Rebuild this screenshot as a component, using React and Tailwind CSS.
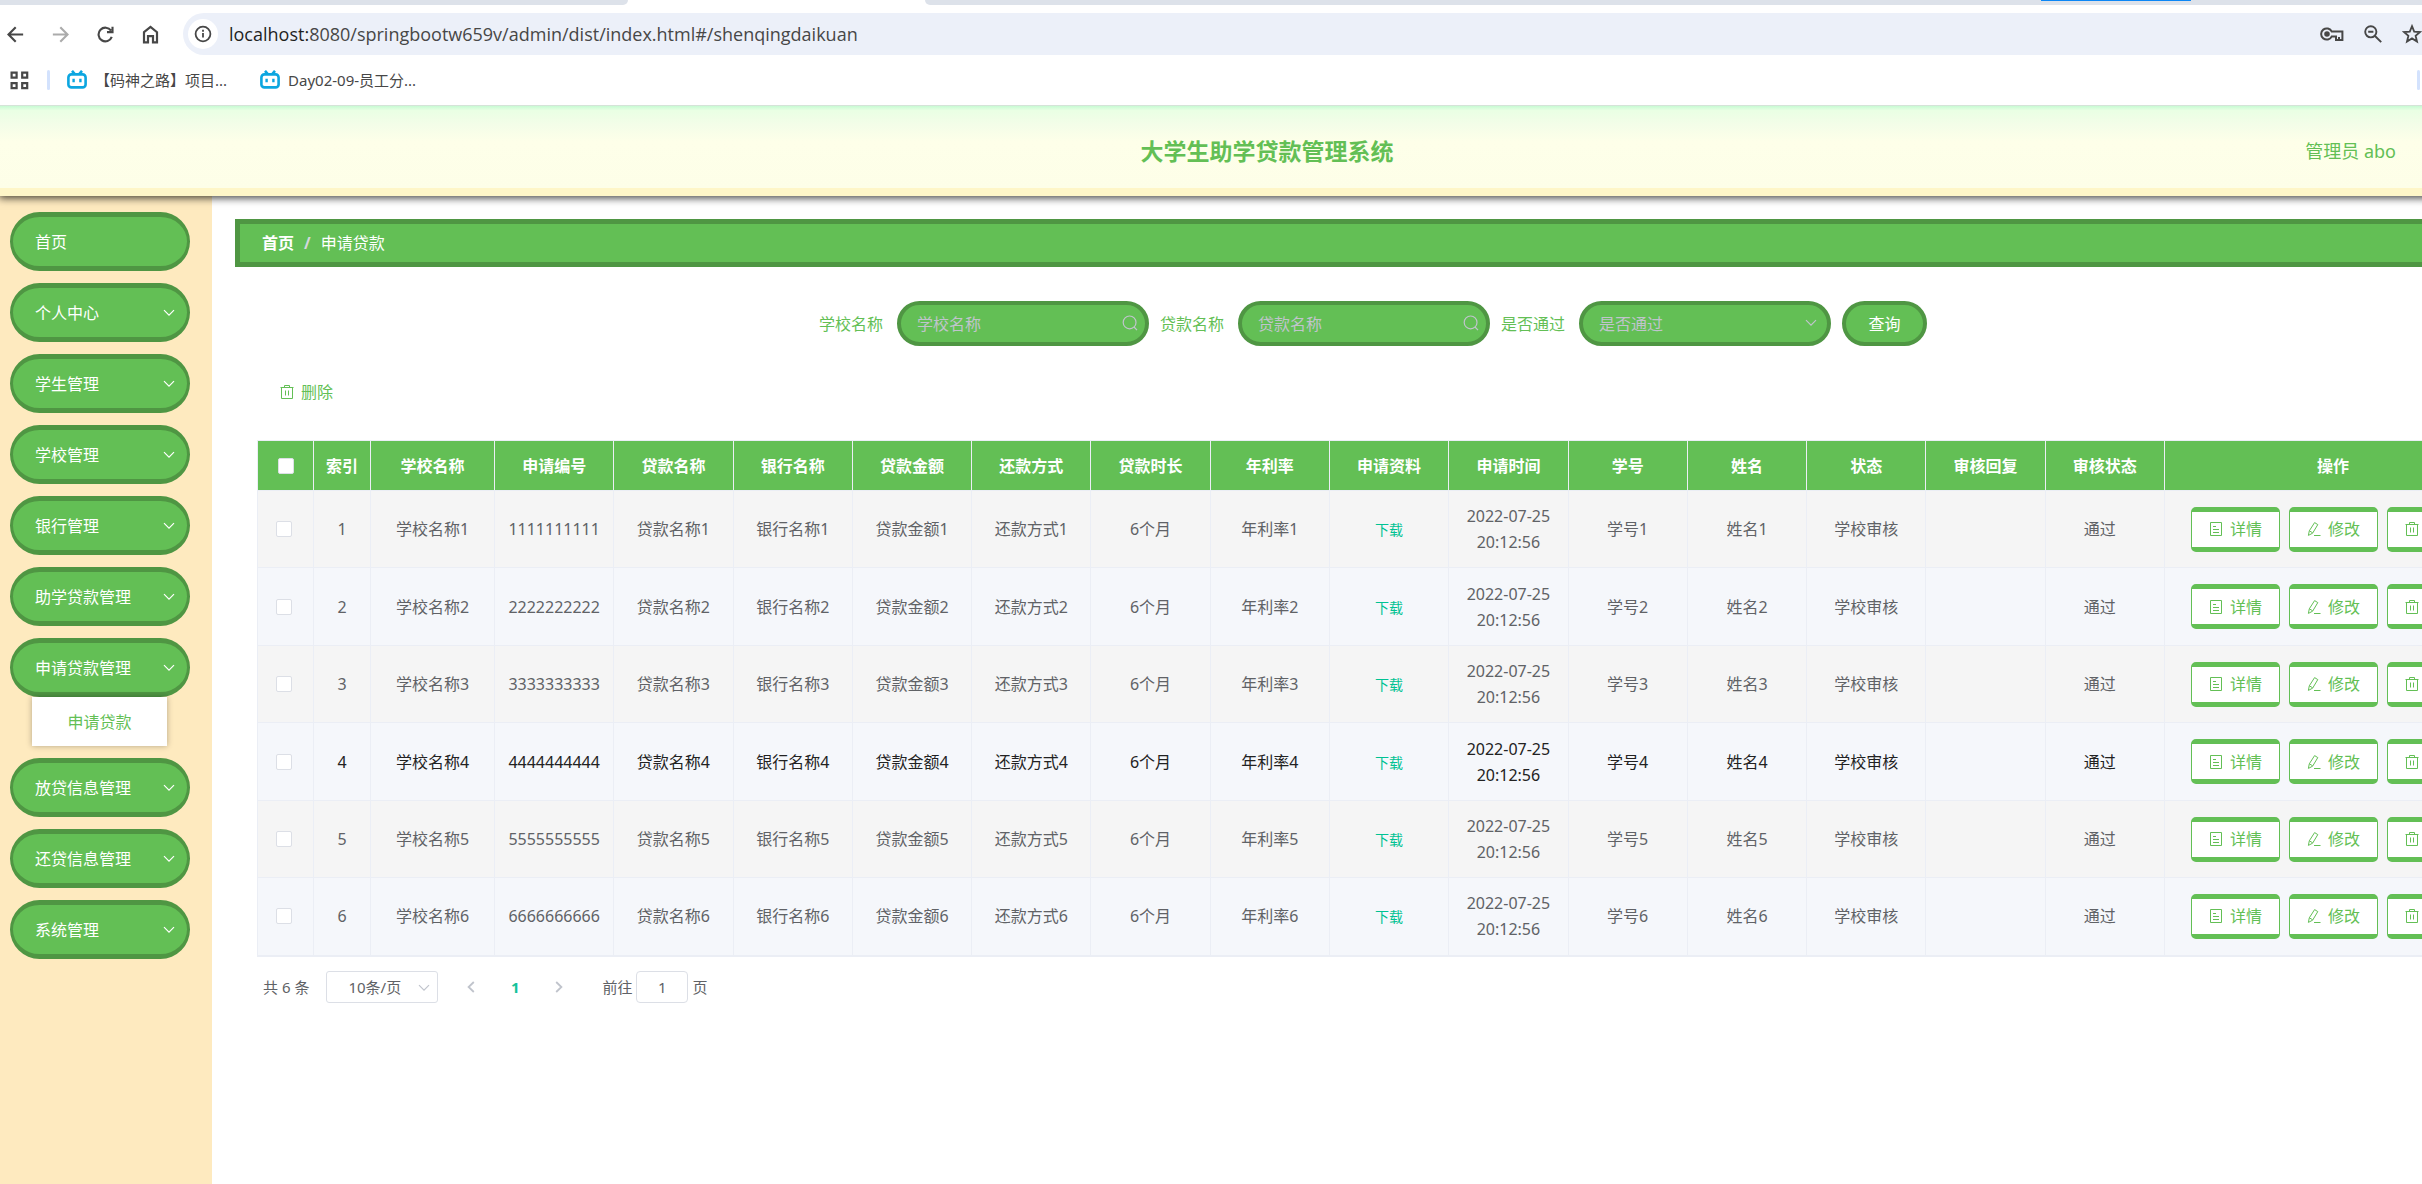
import { useState } from 'react'

const menus = [
  { name: '首页' },
  { name: '个人中心', more: true },
  { name: '学生管理', more: true },
  { name: '学校管理', more: true },
  { name: '银行管理', more: true },
  { name: '助学贷款管理', more: true },
  { name: '申请贷款管理', more: true, children: ['申请贷款'] },
  { name: '放贷信息管理', more: true },
  { name: '还贷信息管理', more: true },
  { name: '系统管理', more: true },
]

const columns = [
  '学校名称', '申请编号', '贷款名称', '银行名称', '贷款金额', '还款方式', '贷款时长', '年利率',
  '申请资料', '申请时间', '学号', '姓名', '状态', '审核回复', '审核状态',
]

const rows = [1, 2, 3, 4, 5, 6].map((n) => ({
  id: n,
  school: `学校名称${n}`,
  code: String(n).repeat(10),
  loan: `贷款名称${n}`,
  bank: `银行名称${n}`,
  amount: `贷款金额${n}`,
  repay: `还款方式${n}`,
  term: '6个月',
  rate: `年利率${n}`,
  time: '2022-07-25 20:12:56',
  number: `学号${n}`,
  student: `姓名${n}`,
  status: '学校审核',
  reply: '',
  result: '通过',
}))

function Icon({ className, box = '0 0 16 16', width = 1, children }) {
  return (
    <svg className={className} viewBox={box} fill="none" stroke="currentColor" strokeWidth={width} aria-hidden="true">
      {children}
    </svg>
  )
}

function Chevron({ className }) {
  return (
    <Icon className={className} box="0 0 12 8" width={1.2}>
      <path d="M1 1.2l5 5 5-5" />
    </Icon>
  )
}

function TrashIcon() {
  return (
    <Icon className="size-4">
      <path d="M1.5 3.5h13M5.5 3.5v-2h5v2M2.5 3.5v11h11v-11M6.5 6.5v5M9.5 6.5v5" />
    </Icon>
  )
}

function DocIcon() {
  return (
    <Icon className="size-4">
      <path d="M2.5 1.5h11v13h-11zM5 5.5h3M5 8.5h6M5 11.5h6" />
    </Icon>
  )
}

function EditIcon() {
  return (
    <Icon className="size-4">
      <path d="M8.6 1.6l3.2 2-5.2 8.6-4.2 2.2.9-4.6zM3.4 9.8l3.2 2M8 14.5h6.5" />
    </Icon>
  )
}

function BiliIcon() {
  return (
    <svg className="h-5 w-5 text-[#0ca6e0]" viewBox="0 0 20 20" fill="none" stroke="currentColor" strokeWidth="2.6" aria-hidden="true">
      <path d="M5 .8l2.6 3M15 .8l-2.6 3" />
      <rect x="1.4" y="4.4" width="17.2" height="13" rx="3" />
      <path d="M6.6 8.8v3.4M13.4 8.8v3.4" strokeWidth="2.4" />
    </svg>
  )
}

function Browser() {
  return (
    <div className="relative z-10 bg-white text-[#474747]">
      <div className="relative flex h-[5px] justify-between">
        <div className="w-[628px] rounded-br-lg bg-[#dde2ea]" />
        <div className="w-[1497px] rounded-bl-lg bg-[#dde2ea]" />
        <div className="absolute right-[231px] top-0 h-px w-[150px] bg-[#0b86f5]" />
      </div>
      <div className="mt-2 flex h-[42px] items-center">
        <div className="flex w-[183px] items-center gap-7 pl-[7px]">
          <button type="button" aria-label="后退">
            <Icon className="size-[17px]" width={2}>
              <path d="M15.2 8H2M8.2 1.2L1.4 8l6.8 6.8" />
            </Icon>
          </button>
          <button type="button" aria-label="前进" className="text-[#ababab]">
            <Icon className="size-[17px]" width={2}>
              <path d="M.8 8H14M7.8 1.2L14.6 8l-6.8 6.8" />
            </Icon>
          </button>
          <button type="button" aria-label="刷新">
            <Icon className="size-[17px]" width={2}>
              <path d="M13.9 10.2A6.4 6.4 0 1 1 13.2 4.4M14.6.6v5.2H9.4" />
            </Icon>
          </button>
          <button type="button" aria-label="主页">
            <Icon className="h-[19px] w-[17px]" box="0 0 17 19" width={2.2}>
              <path d="M2 7.2L8.5 2 15 7.2V17.4h-4v-6.2H6v6.2H2z" />
            </Icon>
          </button>
        </div>
        <div className="flex h-full flex-1 items-center rounded-l-full bg-[#ecf0f9] pl-[5px]">
          <span className="grid size-[30px] place-items-center rounded-full bg-white">
            <Icon className="size-[18px]" box="0 0 18 18" width={1.8}>
              <circle cx="9" cy="9" r="7.4" />
              <path d="M9 8v4.6M9 4.8v1.9" />
            </Icon>
          </span>
          <span className="ml-[11px] flex-1 font-['Open_Sans',sans-serif] text-[18px] leading-6">
            <span className="text-[#1f1f1f]">localhost:</span>8080/springbootw659v/admin/dist/index.html#/shenqingdaikuan
          </span>
          <div className="flex items-center gap-5">
            <Icon className="h-[14px] w-6" box="0 0 24 14" width={2}>
              <path d="M11.8 4.6A5.6 5.6 0 1 0 11.8 9.4H16V13h6.4V4.6z" />
              <circle cx="7" cy="7" r="1.8" fill="currentColor" />
              <path d="M19 13v-3" />
            </Icon>
            <Icon className="size-[18px]" box="0 0 18 18" width={1.9}>
              <circle cx="6.8" cy="6.8" r="5.6" />
              <path d="M11 11l6.2 6.2M4.2 6.8h5.2" />
            </Icon>
            <Icon className="size-5" box="0 0 20 20" width={1.8}>
              <path d="M10 2.2l2.2 5.4 5.8.4-4.4 3.8 1.4 5.8-5-3.2-5 3.2 1.4-5.8L2 8l5.8-.4z" />
            </Icon>
          </div>
        </div>
      </div>
      <div className="flex h-[51px] items-center border-b border-[#d5e3d8] pl-2.5 font-['Noto_Sans','Noto_Sans_CJK_SC',sans-serif] text-[15px]">
        <Icon className="size-[19px]" box="0 0 19 19" width={2.2}>
          <path d="M1.6 1.6h5v5h-5zM12.2 1.6h5v5h-5zM1.6 12.2h5v5h-5zM12.2 12.2h5v5h-5z" />
        </Icon>
        <span className="ml-[18px] h-5 w-[3px] rounded-full bg-[#d3e2fd]" />
        <a href="#bookmark-1" className="ml-[17px] flex items-center gap-2">
          <BiliIcon />
          【码神之路】项目...
        </a>
        <a href="#bookmark-2" className="ml-[33px] flex items-center gap-2">
          <BiliIcon />
          Day02-09-员工分...
        </a>
        <span className="ml-auto mr-0.5 h-5 w-[3px] rounded-full bg-[#d3e2fd]" />
      </div>
    </div>
  )
}

function Sidebar() {
  return (
    <nav className="flex w-[212px] shrink-0 flex-col gap-3 bg-[#feeabf] px-2.5 pt-4">
      {menus.map((m) => (
        <div key={m.name}>
          <button
            type="button"
            className="flex h-[59px] w-[180px] items-center justify-between rounded-full border-x-[3px] border-y-[5px] border-[#4f9643] bg-[#63bf55] pl-[22px] pr-3 text-white"
          >
            {m.name}
            {m.more ? <Chevron className="h-2 w-3" /> : null}
          </button>
          {m.children?.map((c) => (
            <a
              key={c}
              href="#/shenqingdaikuan"
              className="ml-[22px] flex h-[49px] w-[135px] items-center justify-center bg-white text-[#63bf55] shadow-[0_0_6px_rgba(0,0,0,0.3)]"
            >
              {c}
            </a>
          ))}
        </div>
      ))}
    </nav>
  )
}

const field =
  'h-[45px] w-[252px] appearance-none rounded-full border-4 border-[#4f9643] bg-[#63bf55] pl-4 pr-10 text-white outline-none placeholder:text-[#c0c4cc]'

function Search() {
  return (
    <form className="flex items-center justify-center gap-[11px]" onSubmit={(e) => e.preventDefault()}>
      {['学校名称', '贷款名称'].map((name) => (
        <div key={name} className="flex items-center gap-3.5">
          <label htmlFor={name} className="text-[#63bf55]">{name}</label>
          <div className="relative">
            <input id={name} className={field} placeholder={name} />
            <Icon className="absolute right-[11px] top-3.5 size-4 text-[#c0c4cc]" width={1.2}>
              <circle cx="7.6" cy="7.4" r="6.4" />
              <path d="M12 12l3 3.2" />
            </Icon>
          </div>
        </div>
      ))}
      <div className="flex items-center gap-3.5">
        <label htmlFor="pass" className="text-[#63bf55]">是否通过</label>
        <div className="relative">
          <select id="pass" className={`${field} !text-[#c0c4cc]`}>
            <option>是否通过</option>
          </select>
          <Chevron className="pointer-events-none absolute right-3.5 top-[18px] h-2 w-3 text-[#c0c4cc]" />
        </div>
      </div>
      <button type="submit" className="h-[45px] w-[85px] rounded-full border-4 border-[#4f9643] bg-[#63bf55] text-white">
        查询
      </button>
    </form>
  )
}

function Action({ icon, children }) {
  return (
    <button
      type="button"
      className="flex h-[45px] w-[89px] items-center justify-center gap-1.5 rounded-[5px] border-x border-y-[5px] border-[#63bf55] bg-white text-[#63bf55]"
    >
      {icon}
      {children}
    </button>
  )
}

const check = 'block size-4 appearance-none rounded-[2px] border border-[#dcdfe6] bg-white checked:bg-[#00c292]'
const cell = 'border border-[#ebeef5] px-2'

function LoanTable() {
  return (
    <table className="w-full table-fixed border-collapse border border-b-2 border-[#ebeef5] text-center text-[#606266]">
      <colgroup>
        <col className="w-14" />
        <col className="w-[57px]" />
        <col className="w-[124px]" />
        {columns.slice(1).map((c) => <col key={c} />)}
        <col className="w-[337px]" />
      </colgroup>
      <thead>
        <tr className="h-[50px] bg-[#63bf55] text-white">
          <th className={cell}>
            <input type="checkbox" aria-label="全选" className={`${check} mx-auto`} />
          </th>
          <th className={cell}>索引</th>
          {columns.map((c) => <th key={c} className={cell}>{c}</th>)}
          <th className={cell}>操作</th>
        </tr>
      </thead>
      <tbody>
        {rows.map((r) => (
          <tr
            key={r.id}
            className={`h-[77px] bg-[#f5f5f5] even:h-[78px] even:bg-[#f5f7fb] ${r.id === 4 ? 'text-[#222222]' : ''}`}
          >
            <td className={cell}>
              <input type="checkbox" aria-label={`选择${r.id}`} className={`${check} ml-2.5`} />
            </td>
            <td className={cell}>{r.id}</td>
            <td className={cell}>{r.school}</td>
            <td className={cell}>{r.code}</td>
            <td className={cell}>{r.loan}</td>
            <td className={cell}>{r.bank}</td>
            <td className={cell}>{r.amount}</td>
            <td className={cell}>{r.repay}</td>
            <td className={cell}>{r.term}</td>
            <td className={cell}>{r.rate}</td>
            <td className={cell}>
              <button type="button" className="text-sm text-[#00c292]">下载</button>
            </td>
            <td className={cell}>{r.time}</td>
            <td className={cell}>{r.number}</td>
            <td className={cell}>{r.student}</td>
            <td className={cell}>{r.status}</td>
            <td className={cell}>{r.reply}</td>
            <td className={cell}><span className="mr-2.5">{r.result}</span></td>
            <td className={cell}>
              <div className="flex justify-center gap-[9px]">
                <Action icon={<DocIcon />}>详情</Action>
                <Action icon={<EditIcon />}>修改</Action>
                <Action icon={<TrashIcon />}>删除</Action>
              </div>
            </td>
          </tr>
        ))}
      </tbody>
    </table>
  )
}

function Pagination() {
  const [page, setPage] = useState('1')

  return (
    <div className="flex h-8 items-center pl-1.5 text-[15px] text-[#606266]">
      <span>共 6 条</span>
      <div className="relative ml-[17px]">
        <select aria-label="每页条数" className="h-8 w-28 appearance-none rounded-[3px] border border-[#dcdfe6] bg-white pl-[21px]">
          <option>10条/页</option>
        </select>
        <Chevron className="pointer-events-none absolute right-2 top-[13px] h-2 w-3 text-[#c0c4cc]" />
      </div>
      <div className="ml-[29px] flex items-center">
        <button type="button" aria-label="上一页" className="text-[#c0c4cc]">
          <Icon className="h-3 w-2" box="0 0 8 12" width={1.8}>
            <path d="M6.8 1L1.6 6l5.2 5" />
          </Icon>
        </button>
        <button type="button" className="w-20 font-bold text-[#13c29a]">1</button>
        <button type="button" aria-label="下一页" className="text-[#c0c4cc]">
          <Icon className="h-3 w-2" box="0 0 8 12" width={1.8}>
            <path d="M1.2 1l5.2 5-5.2 5" />
          </Icon>
        </button>
      </div>
      <label htmlFor="page" className="ml-[39px]">前往</label>
      <input
        id="page"
        className="ml-1 h-8 w-[52px] rounded border border-[#dcdfe6] text-center outline-none"
        value={page}
        onChange={(e) => setPage(e.target.value)}
      />
      <span className="ml-1">页</span>
    </div>
  )
}

export default function App() {
  return (
    <div className="flex min-h-screen flex-col overflow-hidden bg-white">
      <Browser />
      <div className="flex w-[calc(100%+112px)] flex-1 flex-col font-['Noto_Sans','Noto_Sans_CJK_SC',sans-serif] text-base leading-[26px]">
        <header className="relative grid h-[90px] grid-cols-3 items-center border-b-8 border-[#fef6c8] bg-[linear-gradient(#c8fbd4,#e9ffe4_5%,#f3fde8_20%,#feffe9_40%,#fdfee8_92%,#f4f8e4)] bg-origin-border pt-2 text-[#63bf55] shadow-[0_1px_8px_1px_rgba(0,0,0,0.75)]">
          <h1 className="col-start-2 text-center text-[23px] font-bold">大学生助学贷款管理系统</h1>
          <p className="pr-[138px] text-right text-[18px]">管理员 abo</p>
        </header>
        <div className="flex flex-1">
          <Sidebar />
          <main className="flex-1 px-[23px] pt-[23px]">
            <div className="flex h-12 items-center gap-2.5 border-[5px] border-[#4f9643] bg-[#63bf55] pl-[22px] text-white">
              <a href="#/" className="font-bold">首页</a>
              <span className="font-bold text-[#d3d7dc]">/</span>
              <span>申请贷款</span>
            </div>
            <div className="pt-[34px]">
              <Search />
            </div>
            <div className="pl-[22px] pr-[9px]">
              <button type="button" className="ml-[22px] mt-[33px] flex items-center gap-1.5 text-[#63bf55]">
                <TrashIcon />
                删除
              </button>
              <div className="mt-[35px]">
                <LoanTable />
              </div>
              <div className="mt-3.5">
                <Pagination />
              </div>
            </div>
          </main>
        </div>
      </div>
    </div>
  )
}
